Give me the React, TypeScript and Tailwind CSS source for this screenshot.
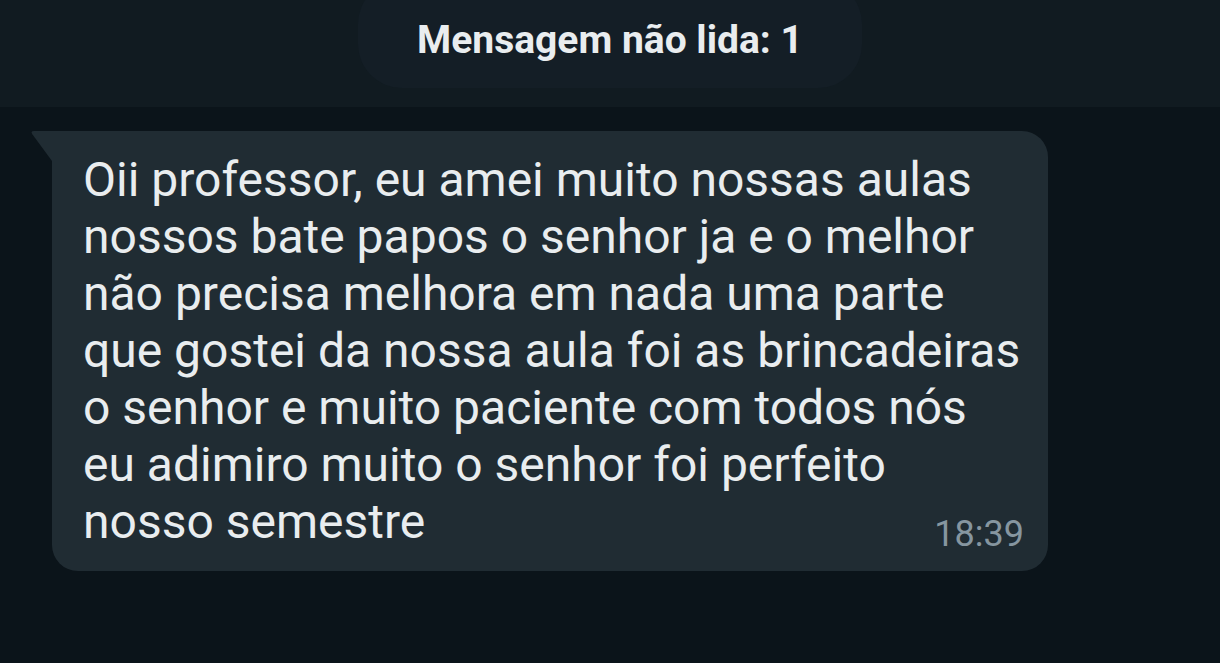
export default function App() {
  const linhas = [
    'Oii professor, eu amei muito nossas aulas',
    'nossos bate papos o senhor ja e o melhor',
    'não precisa melhora em nada uma parte',
    'que gostei da nossa aula foi as brincadeiras',
    'o senhor e muito paciente com todos nós',
    'eu adimiro muito o senhor foi perfeito',
    'nosso semestre',
  ];

  return (
    <div className="w-[1220px] h-[663px] bg-[#0b141a] overflow-hidden" style={{ fontFamily: 'Roboto, "Liberation Sans", sans-serif' }}>
      <div className="h-[107px] bg-[#111b21] flex justify-center">
        <div className="w-[504px] h-[108px] -mt-[20px] pt-[20px] rounded-[44px] bg-[#141e26] flex items-center justify-center">
          <span className="text-[39px] leading-none font-bold text-[#e9edef] -mt-[8px]">Mensagem não lida: 1</span>
        </div>
      </div>

      <div className="pt-[24px] pl-[30px]">
        <div className="flex">
          <svg width="22" height="30" viewBox="0 0 22 30" className="shrink-0">
            <path d="M22 0 H4 Q0 0 2.5 3.5 L22 30 Z" fill="#202c33" />
          </svg>
          <div className="w-[996px] h-[440px] bg-[#202c33] rounded-[26px] rounded-tl-none pl-[31px] pr-[24px] pt-[20px] relative">
            <div className="text-[48px] leading-[57px] text-[#e9edef]">
              {linhas.map((l) => (
                <div key={l} className="whitespace-nowrap">{l}</div>
              ))}
            </div>
            <span className="absolute right-[24px] bottom-[10px] text-[36px] text-[#8696a0]">18:39</span>
          </div>
        </div>
      </div>
    </div>
  );
}
